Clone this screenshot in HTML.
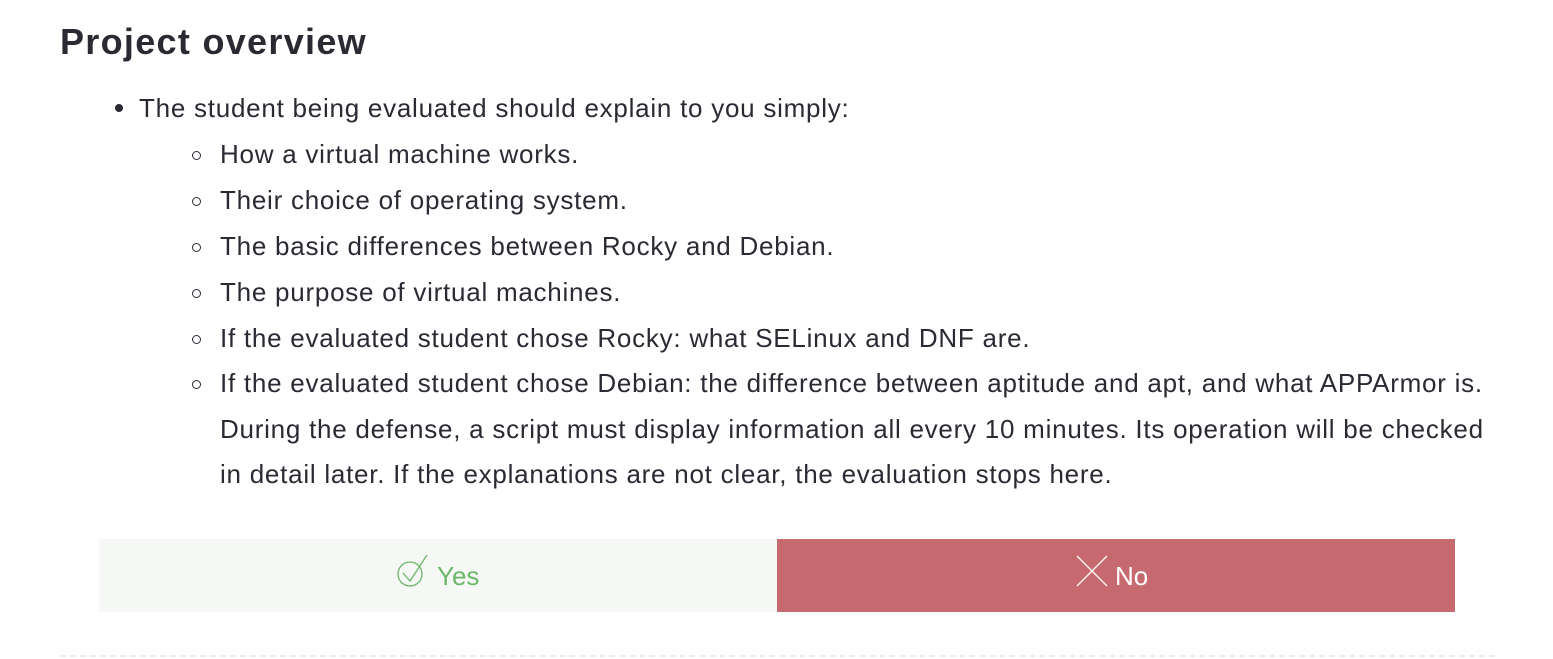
<!DOCTYPE html>
<html><head><style>
body{margin:0;width:1553px;height:659px;background:#fff;font-family:"Liberation Sans",sans-serif;color:#2b2a33;position:relative;overflow:hidden}
h1{position:absolute;left:60px;top:21px;margin:0;font-size:36px;font-weight:bold;letter-spacing:1.3px}
.t{position:absolute;font-size:26px;white-space:nowrap;line-height:46px;letter-spacing:0.75px}
.dot{position:absolute;width:8px;height:8px;border-radius:50%;background:#2b2a33}
.c{position:absolute;width:9px;height:9px;border-radius:50%;border:1.3px solid #2b2a33;box-sizing:border-box}
.yes{position:absolute;left:99px;top:539px;width:678px;height:73px;background:#f6f8f6}
.no{position:absolute;left:777px;top:539px;width:678px;height:73px;background:#c66a70}
.lab{position:absolute;top:20px;font-size:26px;line-height:34px}
.dash{position:absolute;left:60px;top:655px;width:1435px;border-top:2px dashed #eceded}
</style></head><body>
<h1>Project overview</h1>
<div class="dot" style="left:115px;top:104px"></div>
<div class="t" style="left:139px;top:85px">The student being evaluated should explain to you simply:</div>
<div class="c" style="left:192px;top:151px"></div>
<div class="t" style="left:220px;top:131px">How a virtual machine works.</div>
<div class="c" style="left:192px;top:197px"></div>
<div class="t" style="left:220px;top:177px">Their choice of operating system.</div>
<div class="c" style="left:192px;top:243px"></div>
<div class="t" style="left:220px;top:223px">The basic differences between Rocky and Debian.</div>
<div class="c" style="left:192px;top:289px"></div>
<div class="t" style="left:220px;top:269px">The purpose of virtual machines.</div>
<div class="c" style="left:192px;top:335px"></div>
<div class="t" style="left:220px;top:315px">If the evaluated student chose Rocky: what SELinux and DNF are.</div>
<div class="c" style="left:192px;top:380px"></div>
<div class="t" style="left:220px;top:360px">If the evaluated student chose Debian: the difference between aptitude and apt, and what APPArmor is.</div>
<div class="t" style="left:220px;top:406px">During the defense, a script must display information all every 10 minutes. Its operation will be checked</div>
<div class="t" style="left:220px;top:451px">in detail later. If the explanations are not clear, the evaluation stops here.</div>
<div class="yes">
<svg style="position:absolute;left:298px;top:14px" width="34" height="36" viewBox="0 0 34 36"><circle cx="13" cy="21" r="12" fill="none" stroke="#6cb76a" stroke-width="1.3"/><path d="M6 20 L13 28 L30 2" fill="none" stroke="#6cb76a" stroke-width="1.3"/></svg>
<div class="lab" style="left:338px;color:#6cb76a">Yes</div>
</div>
<div class="no">
<svg style="position:absolute;left:298px;top:15px" width="34" height="34"><path d="M2 2 L32 32 M32 2 L2 32" stroke="#fff" stroke-width="1.3"/></svg>
<div class="lab" style="left:338px;color:#fff">No</div>
</div>
<div class="dash"></div>
</body></html>
